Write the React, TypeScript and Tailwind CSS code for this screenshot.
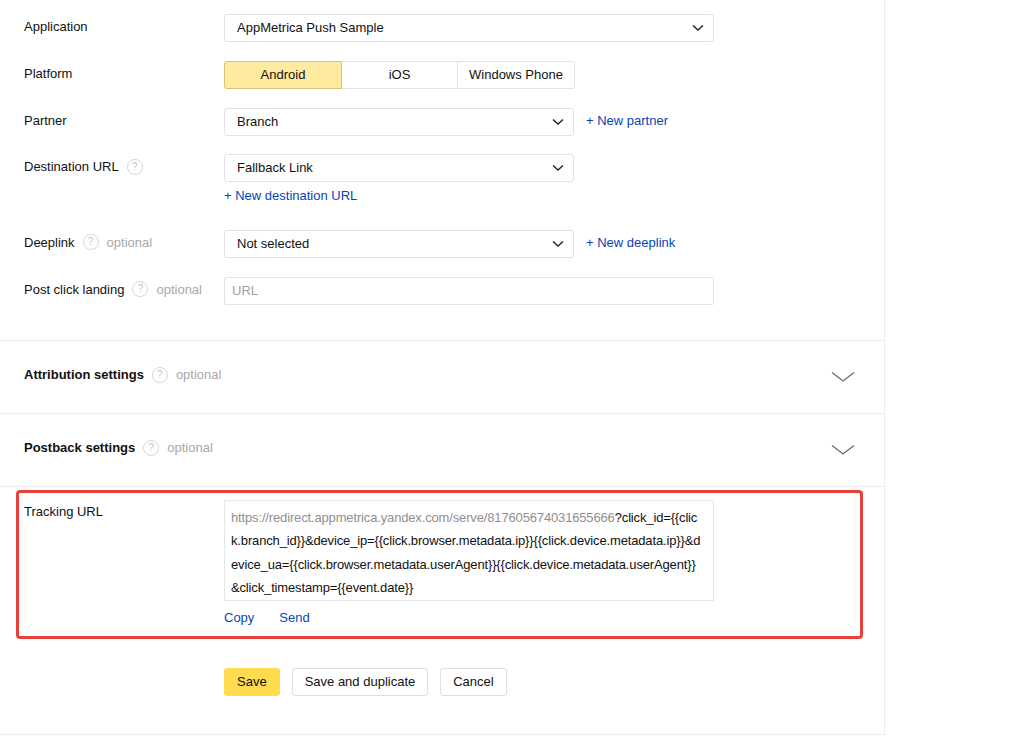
import React from 'react';

const font = { fontFamily: '"Liberation Sans", Arial, sans-serif' };

const Help = () => (
  <span className="inline-flex items-center justify-center w-[16px] h-[16px] rounded-full border border-[#d6d6d6] text-[10px] leading-none text-[#c4c4c4] ml-[8px] shrink-0">
    ?
  </span>
);

const Optional = () => <span className="ml-[8px] text-[#a8a8a8]">optional</span>;

const Chevron = ({ big }: { big?: boolean }) =>
  big ? (
    <svg width="24" height="12" viewBox="0 0 24 12" fill="none">
      <path d="M1 1.5 L12 10 L23 1.5" stroke="#6b6b6b" strokeWidth="1.3" />
    </svg>
  ) : (
    <svg width="12" height="8" viewBox="0 0 12 8" fill="none">
      <path d="M1 1.5 L6 6 L11 1.5" stroke="#222" strokeWidth="1.4" />
    </svg>
  );

const Select = ({ value, wide }: { value: string; wide?: boolean }) => (
  <div
    className={`flex items-center justify-between h-[28px] border border-[#e3e3e3] rounded-[3px] pl-[12px] pr-[9px] text-[13px] text-[#111] ${
      wide ? 'w-[490px]' : 'w-[350px]'
    }`}
  >
    <span>{value}</span>
    <Chevron />
  </div>
);

const Label = ({ children }: { children: React.ReactNode }) => (
  <div className="w-[224px] pl-[24px] pt-[3px] flex items-center whitespace-nowrap text-[13px] text-[#111] shrink-0">
    {children}
  </div>
);

const Link = ({ children, className = '' }: { children: React.ReactNode; className?: string }) => (
  <span className={`text-[13px] text-[#0645b8] ${className}`}>{children}</span>
);

const Section = ({ title }: { title: string }) => (
  <div className="h-[73px] border-b border-[#ececec] flex items-center justify-between pl-[24px] pr-[29px]">
    <div className="flex items-center text-[13px] mb-[4px]">
      <span className="font-bold text-[#111]">{title}</span>
      <Help />
      <Optional />
    </div>
    <Chevron big />
  </div>
);

const urlLines = [
  '?click_id={{clic',
  'k.branch_id}}&device_ip={{click.browser.metadata.ip}}{{click.device.metadata.ip}}&d',
  'evice_ua={{click.browser.metadata.userAgent}}{{click.device.metadata.userAgent}}',
  '&click_timestamp={{event.date}}',
];

export default function App() {
  return (
    <div className="w-[1018px] h-[739px] bg-white overflow-hidden" style={font}>
      <div className="w-[885px] h-[735px] border-r border-b border-[#ececec]">
        <div className="pt-[14px] pb-[35px] border-b border-[#ececec] flex flex-col">
          <div className="flex items-start">
            <Label>Application</Label>
            <Select value="AppMetrica Push Sample" wide />
          </div>

          <div className="flex items-start mt-[19px]">
            <Label>Platform</Label>
            <div className="flex h-[28px] text-[13px] text-[#111]">
              <div className="w-[118px] flex items-center justify-center bg-[#ffeba0] border border-[#dcc273] rounded-l-[3px]">
                Android
              </div>
              <div className="w-[116px] flex items-center justify-center border-y border-r border-[#e3e3e3]">iOS</div>
              <div className="w-[117px] flex items-center justify-center border-y border-r border-[#e3e3e3] rounded-r-[3px]">
                Windows Phone
              </div>
            </div>
          </div>

          <div className="flex items-start mt-[19px]">
            <Label>Partner</Label>
            <Select value="Branch" />
            <Link className="ml-[12px] mt-[3px]">+ New partner</Link>
          </div>

          <div className="flex items-start mt-[18px]">
            <Label>
              Destination URL
              <Help />
            </Label>
            <div className="flex flex-col">
              <Select value="Fallback Link" />
              <Link className="mt-[4px]">+ New destination URL</Link>
            </div>
          </div>

          <div className="flex items-start mt-[24px]">
            <Label>
              Deeplink
              <Help />
              <Optional />
            </Label>
            <Select value="Not selected" />
            <Link className="ml-[12px] mt-[3px]">+ New deeplink</Link>
          </div>

          <div className="flex items-start mt-[19px]">
            <Label>
              Post click landing
              <Help />
              <Optional />
            </Label>
            <div className="w-[490px] h-[28px] border border-[#e3e3e3] rounded-[2px] flex items-center pl-[7px] text-[13px] text-[#a0a0a0]">
              URL
            </div>
          </div>
        </div>

        <Section title="Attribution settings" />
        <Section title="Postback settings" />

        <div className="ml-[16px] mr-[21px] mt-[3px] h-[149px] border-[3px] border-[#e8403a] rounded-[4px] flex items-start pt-[7px]">
          <div className="w-[205px] pl-[5px] pt-[2px] text-[13px] text-[#111] shrink-0">Tracking URL</div>
          <div className="flex flex-col">
            <div className="w-[490px] h-[101px] border border-[#e6e6e6] px-[6px] pt-[5px] text-[13px] leading-[23.5px] tracking-[-0.15px] text-[#111] whitespace-nowrap overflow-hidden">
              <div>
                <span className="text-[#8f8f8f]">https://redirect.appmetrica.yandex.com/serve/817605674031655666</span>
                {urlLines[0]}
              </div>
              <div>{urlLines[1]}</div>
              <div>{urlLines[2]}</div>
              <div>{urlLines[3]}</div>
            </div>
            <div className="flex gap-[25px] mt-[7px]">
              <Link>Copy</Link>
              <Link>Send</Link>
            </div>
          </div>
        </div>

        <div className="flex gap-[12px] pl-[224px] mt-[29px] text-[13px] text-[#111]">
          <div className="h-[28px] px-[13px] flex items-center bg-[#ffdb4d] rounded-[3px]">Save</div>
          <div className="h-[28px] px-[12px] flex items-center border border-[#e0e0e0] rounded-[3px]">Save and duplicate</div>
          <div className="h-[28px] px-[12px] flex items-center border border-[#e0e0e0] rounded-[3px]">Cancel</div>
        </div>
      </div>
    </div>
  );
}
